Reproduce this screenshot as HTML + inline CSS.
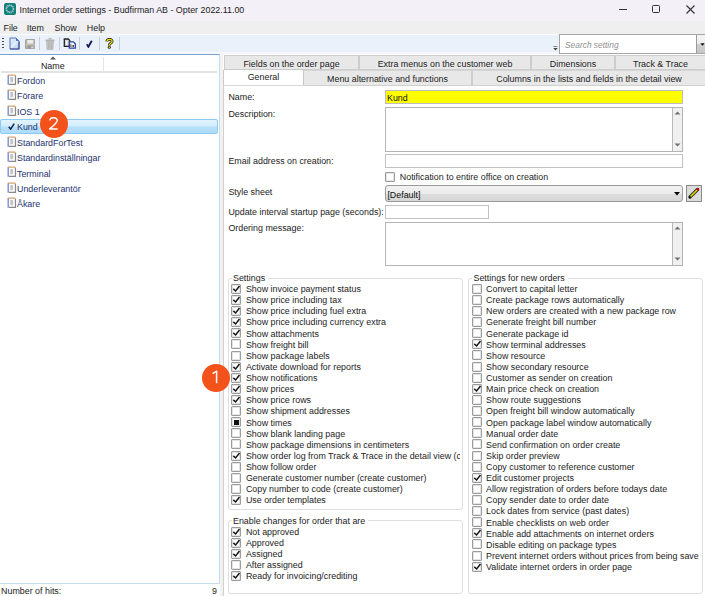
<!DOCTYPE html>
<html><head><meta charset="utf-8"><title>Internet order settings</title>
<style>
html,body{margin:0;padding:0;}
body{width:705px;height:596px;overflow:hidden;position:relative;background:#fff;font-family:"Liberation Sans",sans-serif;font-size:8.9px;}
.a{position:absolute;}
.t{position:absolute;white-space:nowrap;line-height:11px;font-size:8.9px;}
.cb{position:absolute;width:10px;height:10px;box-sizing:border-box;border:1px solid #9c9c9c;box-shadow:inset 0 0 0 1px #e4e4e4;background:#fff;border-radius:1px;}
.cb svg{position:absolute;left:-1px;top:-1px;}
.tab{box-sizing:border-box;border:1px solid #cdcdcd;background:#e8e8e8;}
.badge{position:absolute;width:28px;height:28px;border-radius:50%;background:#f2561d;color:#fff;font-size:17px;line-height:28px;text-align:center;}
</style></head><body>
<div class="a" style="left:0px;top:0px;width:705px;height:21px;background:#f3f0f7"></div>
<svg class="a" style="left:3px;top:2px" width="14" height="14" viewBox="0 0 14 14"><rect x="0.7" y="0.7" width="12.6" height="12.6" rx="2.2" fill="#ffffff"/><rect x="1" y="1" width="12" height="12" rx="2" fill="#14807a"/><circle cx="6.9" cy="6.9" r="3.5" fill="none" stroke="#a9c9d6" stroke-width="1.7" stroke-dasharray="1.2 0.5"/></svg>
<div class="t " style="left:19.5px;top:5.12px;color:#1c1c1c">Internet order settings - Budfirman AB - Opter 2022.11.00</div>
<div class="a" style="left:619px;top:9px;width:8px;height:1px;background:#333"></div>
<div class="a" style="left:652px;top:5px;width:6px;height:6px;border:1.2px solid #333;border-radius:1.5px"></div>
<svg class="a" style="left:686px;top:5px" width="9" height="9" viewBox="0 0 9 9"><path d="M0.5 0.5 L8.5 8.5 M8.5 0.5 L0.5 8.5" stroke="#333" stroke-width="1.1"/></svg>
<div class="a" style="left:0px;top:21px;width:705px;height:13px;background:#efefef"></div>
<div class="t " style="left:3.5px;top:23.12px;color:#222">File</div>
<div class="t " style="left:26.7px;top:23.12px;color:#222">Item</div>
<div class="t " style="left:54.5px;top:23.12px;color:#222">Show</div>
<div class="t " style="left:86.8px;top:23.12px;color:#222">Help</div>
<div class="a" style="left:0px;top:34px;width:558px;height:18px;background:#eaf1fb"></div>
<div class="a" style="left:0px;top:34px;width:558px;height:1px;background:#fbfcfe"></div>
<div class="a" style="left:0px;top:52px;width:558px;height:2px;background:#f3f7fc"></div>
<div class="a" style="left:558px;top:34px;width:147px;height:20px;background:#efefef"></div>
<div class="a" style="left:2px;top:38px;width:2px;height:1.3px;background:#4a4a4a"></div>
<div class="a" style="left:2px;top:41px;width:2px;height:1.3px;background:#4a4a4a"></div>
<div class="a" style="left:2px;top:44px;width:2px;height:1.3px;background:#4a4a4a"></div>
<div class="a" style="left:2px;top:47px;width:2px;height:1.3px;background:#4a4a4a"></div>
<svg class="a" style="left:8.5px;top:37px" width="11" height="13" viewBox="0 0 11 13"><defs><linearGradient id="ng" x1="0" y1="0" x2="1" y2="1"><stop offset="0" stop-color="#e4f1fc"/><stop offset="1" stop-color="#b8d7f2"/></linearGradient></defs><path d="M1 1 H7 L10 4 V12 H1 Z" fill="url(#ng)" stroke="#5a6fc0" stroke-width="1"/><path d="M1 12 H10 V4.5" fill="none" stroke="#4b559a" stroke-width="1.2"/><path d="M7 1 L10 4 H7 Z" fill="#3f74c8"/><path d="M2 10.5 L8.5 4" stroke="#f2f8fe" stroke-width="1.3" opacity="0.8"/></svg>
<svg class="a" style="left:24.5px;top:38.5px" width="10.5" height="10.5" viewBox="0 0 10.5 10.5"><rect x="0.5" y="0.5" width="9.5" height="9.5" rx="0.8" fill="#b4b4ae" stroke="#a2a29c" stroke-width="1"/><rect x="2.3" y="1" width="6" height="3.6" fill="#ececec"/><path d="M1 5.8 H9.5" stroke="#d8ccaa" stroke-width="0.8"/><rect x="2.5" y="6.5" width="5.5" height="3.5" fill="#9a9a9a"/><rect x="6.3" y="7.5" width="1.5" height="1.8" fill="#e6e6e6"/></svg>
<div class="a" style="left:39px;top:37px;width:1px;height:13px;background:#c4cfdc"></div>
<svg class="a" style="left:45px;top:37.5px" width="10" height="12" viewBox="0 0 10 12"><rect x="0.5" y="1.5" width="9" height="1.5" fill="#b8b8b8"/><rect x="3.5" y="0" width="3" height="1.5" fill="#b8b8b8"/><path d="M1.5 3 H8.5 L8 11.5 H2 Z" fill="#c6c6c6" stroke="#aaa" stroke-width="0.6"/><path d="M3.5 4.5 V10.5 M5 4.5 V10.5 M6.5 4.5 V10.5" stroke="#aaa" stroke-width="0.6"/></svg>
<div class="a" style="left:59px;top:37px;width:1px;height:13px;background:#c4cfdc"></div>
<svg class="a" style="left:62.5px;top:37.5px" width="14" height="11" viewBox="0 0 14 11"><path d="M1.3 1 H5.3 L6.8 2.5 V8.3 H1.3 Z" fill="#d0d0d0" stroke="#252525" stroke-width="1.3"/><path d="M3 2.5 H4.3 V7 H3 Z" fill="#fff"/><path d="M6.3 3.8 H10.3 L12.3 5.8 V10.2 H6.3 Z" fill="#fff" stroke="#2c3f9c" stroke-width="1.3"/><path d="M7.8 5.8 V9 M9.2 7 V9 M10.5 7 V9" stroke="#444" stroke-width="0.9"/></svg>
<div class="a" style="left:79px;top:37px;width:1px;height:13px;background:#c4cfdc"></div>
<svg class="a" style="left:86px;top:40px" width="6.5" height="8" viewBox="0 0 6.5 8"><path d="M0.8 4.3 L2.4 6.8 L5.8 0.8" fill="none" stroke="#18205a" stroke-width="1.9"/></svg>
<div class="a" style="left:99px;top:37px;width:1px;height:13px;background:#c4cfdc"></div>
<svg class="a" style="left:105.3px;top:38px" width="9" height="11" viewBox="0 0 9 11"><path d="M1.9 3.6 C1.9 0.6 7.1 0.6 7.1 3.4 C7.1 5.2 4.3 5.2 4.3 7.4" fill="none" stroke="#1e1e1e" stroke-width="2.8"/><path d="M1.9 3.6 C1.9 0.6 7.1 0.6 7.1 3.4 C7.1 5.2 4.3 5.2 4.3 7.4" fill="none" stroke="#f2e200" stroke-width="1.3"/><circle cx="4.3" cy="9.3" r="1.5" fill="#1e1e1e"/><circle cx="4.3" cy="9.2" r="0.8" fill="#f2e200"/></svg>
<div class="a" style="left:119px;top:37px;width:1px;height:13px;background:#c4cfdc"></div>
<svg class="a" style="left:553px;top:46px" width="5" height="5" viewBox="0 0 5 5"><path d="M0.5 0.5 H4.5" stroke="#777" stroke-width="0.9"/><path d="M0.3 2 L2.5 4.5 L4.7 2 Z" fill="#444"/></svg>
<div class="a" style="left:559px;top:34px;width:146px;height:20px;box-sizing:border-box;border:1px solid #a4a4a4;border-right:none;background:#fff"></div>
<div class="t " style="left:565px;top:39.92px;color:#8f8f8f;font-style:italic;font-size:8.4px">Search setting</div>
<div class="a" style="left:696px;top:35px;width:9px;height:18px;background:linear-gradient(#f5f5f5 0%,#ececec 47%,#cfcfcf 53%,#c6c6c6 100%);border-left:1px solid #9a9a9a"></div>
<svg class="a" style="left:699.5px;top:42.5px" width="5" height="4" viewBox="0 0 5 4"><path d="M0.3 0.3 H4.7 L2.5 2.8 Z" fill="#111"/></svg>
<div class="a" style="left:0px;top:54px;width:220px;height:530px;background:#fff;box-sizing:border-box;border-top:1px solid #78a3cf;border-right:1px solid #c5dbf0;border-bottom:1px solid #c5dbf0"></div>
<svg class="a" style="left:50px;top:56px" width="6" height="4" viewBox="0 0 6 4"><path d="M0 3.5 L3 0.5 L6 3.5 Z" fill="#555"/></svg>
<div class="t " style="left:40.9px;top:61.02px;color:#222">Name</div>
<div class="a" style="left:103px;top:57px;width:1px;height:14px;background:#e5e5e5"></div>
<div class="a" style="left:1px;top:71px;width:216px;height:2px;background:#e3e3e3"></div>
<div class="a" style="left:6.6px;top:73.7px"><svg width="10" height="12" viewBox="0 0 10 12"><rect x="1" y="1" width="7.5" height="9.5" fill="#fbfbfb"/><path d="M8.5 1.5 V10.3 H2" fill="none" stroke="#888" stroke-width="1.2"/><path d="M1.2 1 V10.8" stroke="#6f84d2" stroke-width="1.3"/><path d="M1.2 1.1 H8.3" stroke="#d5a060" stroke-width="1.2"/><path d="M3.3 3 H5.8 L6.3 5.5 L5.8 8.3 H3.3 Z" fill="#c4c4c4"/></svg></div>
<div class="t " style="left:17.0px;top:75.82px;color:#24326f">Fordon</div>
<div class="a" style="left:6.6px;top:89.2px"><svg width="10" height="12" viewBox="0 0 10 12"><rect x="1" y="1" width="7.5" height="9.5" fill="#fbfbfb"/><path d="M8.5 1.5 V10.3 H2" fill="none" stroke="#888" stroke-width="1.2"/><path d="M1.2 1 V10.8" stroke="#6f84d2" stroke-width="1.3"/><path d="M1.2 1.1 H8.3" stroke="#d5a060" stroke-width="1.2"/><path d="M3.3 3 H5.8 L6.3 5.5 L5.8 8.3 H3.3 Z" fill="#c4c4c4"/></svg></div>
<div class="t " style="left:17.0px;top:91.27px;color:#24326f">Förare</div>
<div class="a" style="left:6.6px;top:104.6px"><svg width="10" height="12" viewBox="0 0 10 12"><rect x="1" y="1" width="7.5" height="9.5" fill="#fbfbfb"/><path d="M8.5 1.5 V10.3 H2" fill="none" stroke="#888" stroke-width="1.2"/><path d="M1.2 1 V10.8" stroke="#6f84d2" stroke-width="1.3"/><path d="M1.2 1.1 H8.3" stroke="#d5a060" stroke-width="1.2"/><path d="M3.3 3 H5.8 L6.3 5.5 L5.8 8.3 H3.3 Z" fill="#c4c4c4"/></svg></div>
<div class="t " style="left:17.0px;top:106.72px;color:#24326f">IOS 1</div>
<div class="a" style="left:0px;top:119px;width:218px;height:15px;box-sizing:border-box;border:1px solid #8ccaf2;border-radius:2px;background:linear-gradient(#e2f3fd 0%,#d4edfc 45%,#b6e0fa 55%,#aedcf9 100%)"></div>
<svg class="a" style="left:7.5px;top:122.5px" width="7" height="7" viewBox="0 0 7 7"><path d="M0.8 3.8 L2.6 6.2 L6.2 0.6" fill="none" stroke="#14204f" stroke-width="1.5"/></svg>
<div class="t " style="left:17.0px;top:122.17px;color:#24326f">Kund</div>
<div class="a" style="left:6.6px;top:135.5px"><svg width="10" height="12" viewBox="0 0 10 12"><rect x="1" y="1" width="7.5" height="9.5" fill="#fbfbfb"/><path d="M8.5 1.5 V10.3 H2" fill="none" stroke="#888" stroke-width="1.2"/><path d="M1.2 1 V10.8" stroke="#6f84d2" stroke-width="1.3"/><path d="M1.2 1.1 H8.3" stroke="#d5a060" stroke-width="1.2"/><path d="M3.3 3 H5.8 L6.3 5.5 L5.8 8.3 H3.3 Z" fill="#c4c4c4"/></svg></div>
<div class="t " style="left:17.0px;top:137.62px;color:#24326f">StandardForTest</div>
<div class="a" style="left:6.6px;top:150.9px"><svg width="10" height="12" viewBox="0 0 10 12"><rect x="1" y="1" width="7.5" height="9.5" fill="#fbfbfb"/><path d="M8.5 1.5 V10.3 H2" fill="none" stroke="#888" stroke-width="1.2"/><path d="M1.2 1 V10.8" stroke="#6f84d2" stroke-width="1.3"/><path d="M1.2 1.1 H8.3" stroke="#d5a060" stroke-width="1.2"/><path d="M3.3 3 H5.8 L6.3 5.5 L5.8 8.3 H3.3 Z" fill="#c4c4c4"/></svg></div>
<div class="t " style="left:17.0px;top:153.07px;color:#24326f">Standardinställningar</div>
<div class="a" style="left:6.6px;top:166.4px"><svg width="10" height="12" viewBox="0 0 10 12"><rect x="1" y="1" width="7.5" height="9.5" fill="#fbfbfb"/><path d="M8.5 1.5 V10.3 H2" fill="none" stroke="#888" stroke-width="1.2"/><path d="M1.2 1 V10.8" stroke="#6f84d2" stroke-width="1.3"/><path d="M1.2 1.1 H8.3" stroke="#d5a060" stroke-width="1.2"/><path d="M3.3 3 H5.8 L6.3 5.5 L5.8 8.3 H3.3 Z" fill="#c4c4c4"/></svg></div>
<div class="t " style="left:17.0px;top:168.52px;color:#24326f">Terminal</div>
<div class="a" style="left:6.6px;top:181.8px"><svg width="10" height="12" viewBox="0 0 10 12"><rect x="1" y="1" width="7.5" height="9.5" fill="#fbfbfb"/><path d="M8.5 1.5 V10.3 H2" fill="none" stroke="#888" stroke-width="1.2"/><path d="M1.2 1 V10.8" stroke="#6f84d2" stroke-width="1.3"/><path d="M1.2 1.1 H8.3" stroke="#d5a060" stroke-width="1.2"/><path d="M3.3 3 H5.8 L6.3 5.5 L5.8 8.3 H3.3 Z" fill="#c4c4c4"/></svg></div>
<div class="t " style="left:17.0px;top:183.97px;color:#24326f">Underleverantör</div>
<div class="a" style="left:6.6px;top:197.3px"><svg width="10" height="12" viewBox="0 0 10 12"><rect x="1" y="1" width="7.5" height="9.5" fill="#fbfbfb"/><path d="M8.5 1.5 V10.3 H2" fill="none" stroke="#888" stroke-width="1.2"/><path d="M1.2 1 V10.8" stroke="#6f84d2" stroke-width="1.3"/><path d="M1.2 1.1 H8.3" stroke="#d5a060" stroke-width="1.2"/><path d="M3.3 3 H5.8 L6.3 5.5 L5.8 8.3 H3.3 Z" fill="#c4c4c4"/></svg></div>
<div class="t " style="left:17.0px;top:199.42px;color:#24326f">Åkare</div>
<div class="t " style="left:1.1px;top:586.12px;color:#222">Number of hits:</div>
<div class="t " style="left:212px;top:586.12px;color:#222">9</div>
<div class="a" style="left:220px;top:54px;width:3px;height:542px;background:#f2f2f2"></div>
<div class="a" style="left:223px;top:54px;width:482px;height:542px;background:#fff"></div>
<div class="a tab" style="left:224px;top:55px;width:135px;height:15px"></div>
<div class="t" style="left:224px;width:135px;text-align:center;top:58.92px;color:#222">Fields on the order page</div>
<div class="a tab" style="left:359px;top:55px;width:172px;height:15px"></div>
<div class="t" style="left:359px;width:172px;text-align:center;top:58.92px;color:#222">Extra menus on the customer web</div>
<div class="a tab" style="left:531px;top:55px;width:84px;height:15px"></div>
<div class="t" style="left:531px;width:84px;text-align:center;top:58.92px;color:#222">Dimensions</div>
<div class="a tab" style="left:615px;top:55px;width:91px;height:15px"></div>
<div class="t" style="left:615px;width:91px;text-align:center;top:58.92px;color:#222">Track &amp; Trace</div>
<div class="a tab" style="left:303px;top:70px;width:169px;height:15px;border-bottom:none;border-top-color:#d6d6d6"></div>
<div class="t" style="left:303px;width:169px;text-align:center;top:73.72px;color:#222">Menu alternative and functions</div>
<div class="a tab" style="left:472px;top:70px;width:234px;height:15px;border-bottom:none;border-top-color:#d6d6d6"></div>
<div class="t" style="left:472px;width:234px;text-align:center;top:73.72px;color:#222">Columns in the lists and fields in the detail view</div>
<div class="a" style="left:223px;top:85px;width:490px;height:520px;box-sizing:border-box;border:1px solid #d0d0d0;background:#fff"></div>
<div class="a" style="left:223px;top:69px;width:81px;height:17px;box-sizing:border-box;border:1px solid #c9c9c9;border-bottom:none;border-top-left-radius:2px;background:#fff"></div>
<div class="a" style="left:224px;top:85px;width:80px;height:1px;background:#d9d9d9"></div>
<div class="t" style="left:223px;width:81px;text-align:center;top:72.02px;color:#222">General</div>
<div class="t " style="left:228.4px;top:92.12px;color:#1c1c1c">Name:</div>
<div class="t " style="left:228.4px;top:109.12px;color:#1c1c1c">Description:</div>
<div class="t " style="left:228.4px;top:155.82px;color:#1c1c1c">Email address on creation:</div>
<div class="t " style="left:228.4px;top:187.12px;color:#1c1c1c">Style sheet</div>
<div class="t " style="left:228.4px;top:206.52px;color:#1c1c1c">Update interval startup page (seconds):</div>
<div class="t " style="left:228.4px;top:223.32px;color:#1c1c1c">Ordering message:</div>
<div class="a" style="left:385px;top:90px;width:298px;height:14px;box-sizing:border-box;border:1px solid #bcbcbc;background:#ffff00"></div>
<div class="t " style="left:387px;top:92.72px;color:#111">Kund</div>
<div class="a" style="left:385px;top:107px;width:298px;height:45px;box-sizing:border-box;border:1px solid #b4b4b4;background:#fff"></div>
<div class="a" style="left:672px;top:108px;width:10px;height:43px;box-sizing:border-box;background:#f0f0f0;border-left:1px solid #b8b8b8"></div>
<svg class="a" style="left:674px;top:111px" width="7" height="4" viewBox="0 0 7 4"><path d="M0.5 3.5 L3.5 0.5 L6.5 3.5 Z" fill="#707070"/></svg>
<svg class="a" style="left:674px;top:142.5px" width="7" height="4" viewBox="0 0 7 4"><path d="M0.5 0.5 L3.5 3.5 L6.5 0.5 Z" fill="#707070"/></svg>
<div class="a" style="left:385px;top:154px;width:298px;height:14px;box-sizing:border-box;border:1px solid #c2c2c2;background:#fff"></div>
<div class="cb" style="left:385px;top:172px"></div>
<div class="t " style="left:399.8px;top:172.12px;color:#1c1c1c">Notification to entire office on creation</div>
<div class="a" style="left:385px;top:185px;width:298px;height:17px;box-sizing:border-box;border:1px solid #9a9a9a;border-radius:3px;background:linear-gradient(#f2f2f2 0%,#ebebeb 50%,#dddddd 51%,#d6d6d6 100%)"></div>
<div class="t " style="left:387.4px;top:189.92px;color:#111">[Default]</div>
<svg class="a" style="left:674px;top:192px" width="6" height="4" viewBox="0 0 6 4"><path d="M0 0 H6 L3 3.5 Z" fill="#000"/></svg>
<div class="a" style="left:686px;top:185px;width:16px;height:17px;box-sizing:border-box;border:1px solid #8a8a8a;background:#dcdcdc"></div>
<svg class="a" style="left:688px;top:187px" width="12" height="12" viewBox="0 0 12 12"><path d="M2 10 L9.5 2.5" stroke="#222" stroke-width="3.2" stroke-linecap="round"/><path d="M2.3 9.7 L9.3 2.7" stroke="#e8e000" stroke-width="1.6"/><path d="M8.8 2.2 L10.3 1.2 L10.8 2.8 Z" fill="#d11"/><circle cx="9.8" cy="2.2" r="1.2" fill="#c00"/><path d="M1.2 10.8 L2.5 9.5" stroke="#111" stroke-width="1.5"/></svg>
<div class="a" style="left:385px;top:205px;width:104px;height:14px;box-sizing:border-box;border:1px solid #c2c2c2;background:#fff"></div>
<div class="a" style="left:385px;top:222px;width:298px;height:44px;box-sizing:border-box;border:1px solid #b4b4b4;background:#fff"></div>
<div class="a" style="left:672px;top:223px;width:10px;height:42px;box-sizing:border-box;background:#f0f0f0;border-left:1px solid #b8b8b8"></div>
<svg class="a" style="left:674px;top:226px" width="7" height="4" viewBox="0 0 7 4"><path d="M0.5 3.5 L3.5 0.5 L6.5 3.5 Z" fill="#707070"/></svg>
<svg class="a" style="left:674px;top:256.5px" width="7" height="4" viewBox="0 0 7 4"><path d="M0.5 0.5 L3.5 3.5 L6.5 0.5 Z" fill="#707070"/></svg>
<div class="a" style="left:227.5px;top:277.5px;width:235.5px;height:232.5px;box-sizing:border-box;border:1px solid #dedede;border-radius:3px"></div>
<div class="a" style="left:231.5px;top:275.5px;width:36px;height:4px;background:#fff"></div>
<div class="t " style="left:233.0px;top:273.12px;color:#1c1c1c">Settings</div>
<div class="cb" style="left:231.4px;top:283.8px"><svg width="10" height="10" viewBox="0 0 10 10"><path d="M2.3 4.9 L4.6 7.0 L8.5 2.0" fill="none" stroke="#161616" stroke-width="1.45"/></svg></div>
<div class="t " style="left:245.9px;top:284.12px;color:#1c1c1c;white-space:nowrap;width:214px;overflow:hidden">Show invoice payment status</div>
<div class="cb" style="left:231.4px;top:294.92px"><svg width="10" height="10" viewBox="0 0 10 10"><path d="M2.3 4.9 L4.6 7.0 L8.5 2.0" fill="none" stroke="#161616" stroke-width="1.45"/></svg></div>
<div class="t " style="left:245.9px;top:295.24px;color:#1c1c1c;white-space:nowrap;width:214px;overflow:hidden">Show price including tax</div>
<div class="cb" style="left:231.4px;top:306.04px"><svg width="10" height="10" viewBox="0 0 10 10"><path d="M2.3 4.9 L4.6 7.0 L8.5 2.0" fill="none" stroke="#161616" stroke-width="1.45"/></svg></div>
<div class="t " style="left:245.9px;top:306.36px;color:#1c1c1c;white-space:nowrap;width:214px;overflow:hidden">Show price including fuel extra</div>
<div class="cb" style="left:231.4px;top:317.16px"><svg width="10" height="10" viewBox="0 0 10 10"><path d="M2.3 4.9 L4.6 7.0 L8.5 2.0" fill="none" stroke="#161616" stroke-width="1.45"/></svg></div>
<div class="t " style="left:245.9px;top:317.48px;color:#1c1c1c;white-space:nowrap;width:214px;overflow:hidden">Show price including currency extra</div>
<div class="cb" style="left:231.4px;top:328.28000000000003px"><svg width="10" height="10" viewBox="0 0 10 10"><path d="M2.3 4.9 L4.6 7.0 L8.5 2.0" fill="none" stroke="#161616" stroke-width="1.45"/></svg></div>
<div class="t " style="left:245.9px;top:328.60px;color:#1c1c1c;white-space:nowrap;width:214px;overflow:hidden">Show attachments</div>
<div class="cb" style="left:231.4px;top:339.4px"></div>
<div class="t " style="left:245.9px;top:339.72px;color:#1c1c1c;white-space:nowrap;width:214px;overflow:hidden">Show freight bill</div>
<div class="cb" style="left:231.4px;top:350.52px"></div>
<div class="t " style="left:245.9px;top:350.84px;color:#1c1c1c;white-space:nowrap;width:214px;overflow:hidden">Show package labels</div>
<div class="cb" style="left:231.4px;top:361.64px"><svg width="10" height="10" viewBox="0 0 10 10"><path d="M2.3 4.9 L4.6 7.0 L8.5 2.0" fill="none" stroke="#161616" stroke-width="1.45"/></svg></div>
<div class="t " style="left:245.9px;top:361.96px;color:#1c1c1c;white-space:nowrap;width:214px;overflow:hidden">Activate download for reports</div>
<div class="cb" style="left:231.4px;top:372.76px"><svg width="10" height="10" viewBox="0 0 10 10"><path d="M2.3 4.9 L4.6 7.0 L8.5 2.0" fill="none" stroke="#161616" stroke-width="1.45"/></svg></div>
<div class="t " style="left:245.9px;top:373.08px;color:#1c1c1c;white-space:nowrap;width:214px;overflow:hidden">Show notifications</div>
<div class="cb" style="left:231.4px;top:383.88px"><svg width="10" height="10" viewBox="0 0 10 10"><path d="M2.3 4.9 L4.6 7.0 L8.5 2.0" fill="none" stroke="#161616" stroke-width="1.45"/></svg></div>
<div class="t " style="left:245.9px;top:384.20px;color:#1c1c1c;white-space:nowrap;width:214px;overflow:hidden">Show prices</div>
<div class="cb" style="left:231.4px;top:395.0px"><svg width="10" height="10" viewBox="0 0 10 10"><path d="M2.3 4.9 L4.6 7.0 L8.5 2.0" fill="none" stroke="#161616" stroke-width="1.45"/></svg></div>
<div class="t " style="left:245.9px;top:395.32px;color:#1c1c1c;white-space:nowrap;width:214px;overflow:hidden">Show price rows</div>
<div class="cb" style="left:231.4px;top:406.12px"></div>
<div class="t " style="left:245.9px;top:406.44px;color:#1c1c1c;white-space:nowrap;width:214px;overflow:hidden">Show shipment addresses</div>
<div class="cb" style="left:231.4px;top:417.24px"><div style="position:absolute;left:1.3px;top:1.8px;width:5.6px;height:4.6px;background:#111"></div></div>
<div class="t " style="left:245.9px;top:417.56px;color:#1c1c1c;white-space:nowrap;width:214px;overflow:hidden">Show times</div>
<div class="cb" style="left:231.4px;top:428.36px"></div>
<div class="t " style="left:245.9px;top:428.68px;color:#1c1c1c;white-space:nowrap;width:214px;overflow:hidden">Show blank landing page</div>
<div class="cb" style="left:231.4px;top:439.48px"></div>
<div class="t " style="left:245.9px;top:439.80px;color:#1c1c1c;white-space:nowrap;width:214px;overflow:hidden">Show package dimensions in centimeters</div>
<div class="cb" style="left:231.4px;top:450.6px"><svg width="10" height="10" viewBox="0 0 10 10"><path d="M2.3 4.9 L4.6 7.0 L8.5 2.0" fill="none" stroke="#161616" stroke-width="1.45"/></svg></div>
<div class="t " style="left:245.9px;top:450.92px;color:#1c1c1c;white-space:nowrap;width:214px;overflow:hidden">Show order log from Track &amp; Trace in the detail view (c</div>
<div class="cb" style="left:231.4px;top:461.72px"></div>
<div class="t " style="left:245.9px;top:462.04px;color:#1c1c1c;white-space:nowrap;width:214px;overflow:hidden">Show follow order</div>
<div class="cb" style="left:231.4px;top:472.84000000000003px"></div>
<div class="t " style="left:245.9px;top:473.16px;color:#1c1c1c;white-space:nowrap;width:214px;overflow:hidden">Generate customer number (create customer)</div>
<div class="cb" style="left:231.4px;top:483.96000000000004px"></div>
<div class="t " style="left:245.9px;top:484.28px;color:#1c1c1c;white-space:nowrap;width:214px;overflow:hidden">Copy number to code (create customer)</div>
<div class="cb" style="left:231.4px;top:495.08px"><svg width="10" height="10" viewBox="0 0 10 10"><path d="M2.3 4.9 L4.6 7.0 L8.5 2.0" fill="none" stroke="#161616" stroke-width="1.45"/></svg></div>
<div class="t " style="left:245.9px;top:495.40px;color:#1c1c1c;white-space:nowrap;width:214px;overflow:hidden">Use order templates</div>
<div class="a" style="left:227.5px;top:520px;width:235.5px;height:73.5px;box-sizing:border-box;border:1px solid #dedede;border-radius:3px"></div>
<div class="a" style="left:231.5px;top:518px;width:136px;height:4px;background:#fff"></div>
<div class="t " style="left:233.0px;top:515.62px;color:#1c1c1c">Enable changes for order that are</div>
<div class="cb" style="left:231.4px;top:526.5px"><svg width="10" height="10" viewBox="0 0 10 10"><path d="M2.3 4.9 L4.6 7.0 L8.5 2.0" fill="none" stroke="#161616" stroke-width="1.45"/></svg></div>
<div class="t " style="left:245.9px;top:526.82px;color:#1c1c1c">Not approved</div>
<div class="cb" style="left:231.4px;top:537.58px"><svg width="10" height="10" viewBox="0 0 10 10"><path d="M2.3 4.9 L4.6 7.0 L8.5 2.0" fill="none" stroke="#161616" stroke-width="1.45"/></svg></div>
<div class="t " style="left:245.9px;top:537.90px;color:#1c1c1c">Approved</div>
<div class="cb" style="left:231.4px;top:548.66px"><svg width="10" height="10" viewBox="0 0 10 10"><path d="M2.3 4.9 L4.6 7.0 L8.5 2.0" fill="none" stroke="#161616" stroke-width="1.45"/></svg></div>
<div class="t " style="left:245.9px;top:548.98px;color:#1c1c1c">Assigned</div>
<div class="cb" style="left:231.4px;top:559.74px"></div>
<div class="t " style="left:245.9px;top:560.06px;color:#1c1c1c">After assigned</div>
<div class="cb" style="left:231.4px;top:570.82px"><svg width="10" height="10" viewBox="0 0 10 10"><path d="M2.3 4.9 L4.6 7.0 L8.5 2.0" fill="none" stroke="#161616" stroke-width="1.45"/></svg></div>
<div class="t " style="left:245.9px;top:571.14px;color:#1c1c1c">Ready for invoicing/crediting</div>
<div class="a" style="left:468px;top:277.5px;width:234.5px;height:316.0px;box-sizing:border-box;border:1px solid #dedede;border-radius:3px"></div>
<div class="a" style="left:472px;top:275.5px;width:96px;height:4px;background:#fff"></div>
<div class="t " style="left:473.5px;top:273.12px;color:#1c1c1c">Settings for new orders</div>
<div class="cb" style="left:471.8px;top:283.8px"></div>
<div class="t " style="left:486.1px;top:284.12px;color:#1c1c1c;white-space:nowrap">Convert to capital letter</div>
<div class="cb" style="left:471.8px;top:294.916px"></div>
<div class="t " style="left:486.1px;top:295.23px;color:#1c1c1c;white-space:nowrap">Create package rows automatically</div>
<div class="cb" style="left:471.8px;top:306.03200000000004px"></div>
<div class="t " style="left:486.1px;top:306.35px;color:#1c1c1c;white-space:nowrap">New orders are created with a new package row</div>
<div class="cb" style="left:471.8px;top:317.148px"></div>
<div class="t " style="left:486.1px;top:317.46px;color:#1c1c1c;white-space:nowrap">Generate freight bill number</div>
<div class="cb" style="left:471.8px;top:328.264px"></div>
<div class="t " style="left:486.1px;top:328.58px;color:#1c1c1c;white-space:nowrap">Generate package id</div>
<div class="cb" style="left:471.8px;top:339.38px"><svg width="10" height="10" viewBox="0 0 10 10"><path d="M2.3 4.9 L4.6 7.0 L8.5 2.0" fill="none" stroke="#161616" stroke-width="1.45"/></svg></div>
<div class="t " style="left:486.1px;top:339.70px;color:#1c1c1c;white-space:nowrap">Show terminal addresses</div>
<div class="cb" style="left:471.8px;top:350.496px"></div>
<div class="t " style="left:486.1px;top:350.81px;color:#1c1c1c;white-space:nowrap">Show resource</div>
<div class="cb" style="left:471.8px;top:361.612px"></div>
<div class="t " style="left:486.1px;top:361.93px;color:#1c1c1c;white-space:nowrap">Show secondary resource</div>
<div class="cb" style="left:471.8px;top:372.728px"></div>
<div class="t " style="left:486.1px;top:373.04px;color:#1c1c1c;white-space:nowrap">Customer as sender on creation</div>
<div class="cb" style="left:471.8px;top:383.844px"><svg width="10" height="10" viewBox="0 0 10 10"><path d="M2.3 4.9 L4.6 7.0 L8.5 2.0" fill="none" stroke="#161616" stroke-width="1.45"/></svg></div>
<div class="t " style="left:486.1px;top:384.16px;color:#1c1c1c;white-space:nowrap">Main price check on creation</div>
<div class="cb" style="left:471.8px;top:394.96000000000004px"></div>
<div class="t " style="left:486.1px;top:395.28px;color:#1c1c1c;white-space:nowrap">Show route suggestions</div>
<div class="cb" style="left:471.8px;top:406.076px"></div>
<div class="t " style="left:486.1px;top:406.39px;color:#1c1c1c;white-space:nowrap">Open freight bill window automatically</div>
<div class="cb" style="left:471.8px;top:417.192px"></div>
<div class="t " style="left:486.1px;top:417.51px;color:#1c1c1c;white-space:nowrap">Open package label window automatically</div>
<div class="cb" style="left:471.8px;top:428.308px"></div>
<div class="t " style="left:486.1px;top:428.62px;color:#1c1c1c;white-space:nowrap">Manual order date</div>
<div class="cb" style="left:471.8px;top:439.424px"></div>
<div class="t " style="left:486.1px;top:439.74px;color:#1c1c1c;white-space:nowrap">Send confirmation on order create</div>
<div class="cb" style="left:471.8px;top:450.54px"></div>
<div class="t " style="left:486.1px;top:450.86px;color:#1c1c1c;white-space:nowrap">Skip order preview</div>
<div class="cb" style="left:471.8px;top:461.656px"></div>
<div class="t " style="left:486.1px;top:461.97px;color:#1c1c1c;white-space:nowrap">Copy customer to reference customer</div>
<div class="cb" style="left:471.8px;top:472.772px"><svg width="10" height="10" viewBox="0 0 10 10"><path d="M2.3 4.9 L4.6 7.0 L8.5 2.0" fill="none" stroke="#161616" stroke-width="1.45"/></svg></div>
<div class="t " style="left:486.1px;top:473.09px;color:#1c1c1c;white-space:nowrap">Edit customer projects</div>
<div class="cb" style="left:471.8px;top:483.88800000000003px"></div>
<div class="t " style="left:486.1px;top:484.20px;color:#1c1c1c;white-space:nowrap">Allow registration of orders before todays date</div>
<div class="cb" style="left:471.8px;top:495.004px"></div>
<div class="t " style="left:486.1px;top:495.32px;color:#1c1c1c;white-space:nowrap">Copy sender date to order date</div>
<div class="cb" style="left:471.8px;top:506.12px"></div>
<div class="t " style="left:486.1px;top:506.44px;color:#1c1c1c;white-space:nowrap">Lock dates from service (past dates)</div>
<div class="cb" style="left:471.8px;top:517.236px"></div>
<div class="t " style="left:486.1px;top:517.55px;color:#1c1c1c;white-space:nowrap">Enable checklists on web order</div>
<div class="cb" style="left:471.8px;top:528.352px"><svg width="10" height="10" viewBox="0 0 10 10"><path d="M2.3 4.9 L4.6 7.0 L8.5 2.0" fill="none" stroke="#161616" stroke-width="1.45"/></svg></div>
<div class="t " style="left:486.1px;top:528.67px;color:#1c1c1c;white-space:nowrap">Enable add attachments on internet orders</div>
<div class="cb" style="left:471.8px;top:539.4680000000001px"></div>
<div class="t " style="left:486.1px;top:539.78px;color:#1c1c1c;white-space:nowrap">Disable editing on package types</div>
<div class="cb" style="left:471.8px;top:550.5840000000001px"></div>
<div class="t " style="left:486.1px;top:550.90px;color:#1c1c1c;white-space:nowrap">Prevent internet orders without prices from being save</div>
<div class="cb" style="left:471.8px;top:561.7px"><svg width="10" height="10" viewBox="0 0 10 10"><path d="M2.3 4.9 L4.6 7.0 L8.5 2.0" fill="none" stroke="#161616" stroke-width="1.45"/></svg></div>
<div class="t " style="left:486.1px;top:562.02px;color:#1c1c1c;white-space:nowrap">Validate internet orders in order page</div>
<svg class="a" style="left:40px;top:110px" width="28" height="28" viewBox="0 0 28 28"><circle cx="14" cy="14" r="14" fill="#f4521b"/><path d="M9.9 10.4 C9.9 6.9 17.2 6.7 17.2 10.6 C17.2 13.2 13.5 15.6 9.7 18.9 H17.7" fill="none" stroke="#fff" stroke-width="1.45" stroke-linejoin="round"/></svg>
<svg class="a" style="left:202px;top:364px" width="28" height="28" viewBox="0 0 28 28"><circle cx="14" cy="14" r="14" fill="#f4521b"/><path d="M10.6 9.6 L14.6 7.2 V19.2" fill="none" stroke="#fff" stroke-width="1.5" stroke-linejoin="round"/></svg>
</body></html>
